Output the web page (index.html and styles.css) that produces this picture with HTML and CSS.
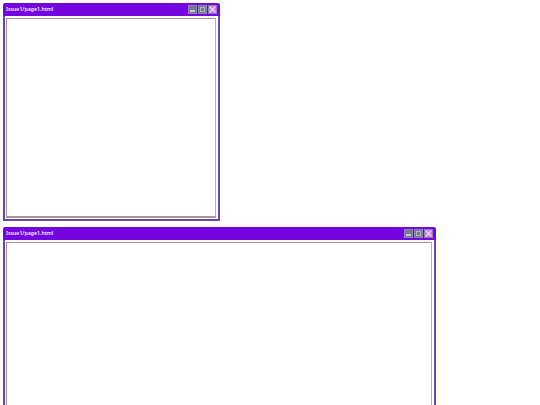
FILE: index.html
```html
<!DOCTYPE html>
<html lang="en">
<head>
  <meta charset="UTF-8">
  <title>Windows</title>
  <link rel="stylesheet" href="styles.css">
</head>
<body>
  <div class="window small">
    <div class="titlebar">
      <span class="title">Issue1/page1.html</span>
      <div class="buttons">
        <div class="btn"><span class="min-glyph"></span></div>
        <div class="btn"><span class="max-glyph"></span></div>
        <div class="btn close">
          <svg viewBox="0 0 8 8" width="7" height="7"><path d="M1 1 L7 7 M7 1 L1 7" stroke="#f4e4fa" stroke-width="1.2" fill="none"/></svg>
        </div>
      </div>
    </div>
    <div class="content"></div>
  </div>

  <div class="window large">
    <div class="titlebar">
      <span class="title">Issue1/page1.html</span>
      <div class="buttons">
        <div class="btn"><span class="min-glyph"></span></div>
        <div class="btn"><span class="max-glyph"></span></div>
        <div class="btn close">
          <svg viewBox="0 0 8 8" width="7" height="7"><path d="M1 1 L7 7 M7 1 L1 7" stroke="#f4e4fa" stroke-width="1.2" fill="none"/></svg>
        </div>
      </div>
    </div>
    <div class="content"></div>
  </div>
</body>
</html>
```

FILE: styles.css
```css
* { margin: 0; padding: 0; box-sizing: border-box; }
html, body { height: 405px; overflow: hidden; background-color: #ffffff; }
body { padding: 3px 0 0 3px; font-family: "Noto Sans", "Open Sans", sans-serif; }

.window { background-color: #ffffff; border: 2px solid #6548a8; border-top: none; border-radius: 3px 3px 0 0; padding: 0 2px 1px 1px; }
.window.small { width: 217px; height: 218px; margin-bottom: 6px; }
.window.large { width: 433px; height: 190px; border-bottom: none; padding-bottom: 0; }

.titlebar { display: flex; align-items: center; justify-content: space-between; height: 13px; margin: 0 -4px 0 -3px; padding: 0 3px 0 3px; background-color: #7405e0; border-radius: 3px 3px 0 0; }
.title { color: #f4ecfc; font-size: 5.2px; font-weight: 600; line-height: 13px; }

.buttons { display: flex; gap: 0.5px; }
.btn { display: flex; align-items: center; justify-content: center; width: 9.5px; height: 9px; background-color: #77778e; border: 1px solid #8c84b4; }
.btn.close { background-color: #cf7ff0; }
.min-glyph { display: block; width: 5px; height: 2px; margin-top: 3px; background-color: #c8c8d0; }
.max-glyph { display: block; width: 5px; height: 5px; border: 1px solid #b4b4c0; }

.content { height: calc(100% - 15px); margin-top: 2px; background-color: #ffffff; border: 1px solid #a8949c; border-right-color: #b4b4a8; border-bottom-width: 2px; }
.large .content { height: 200px; }
```
